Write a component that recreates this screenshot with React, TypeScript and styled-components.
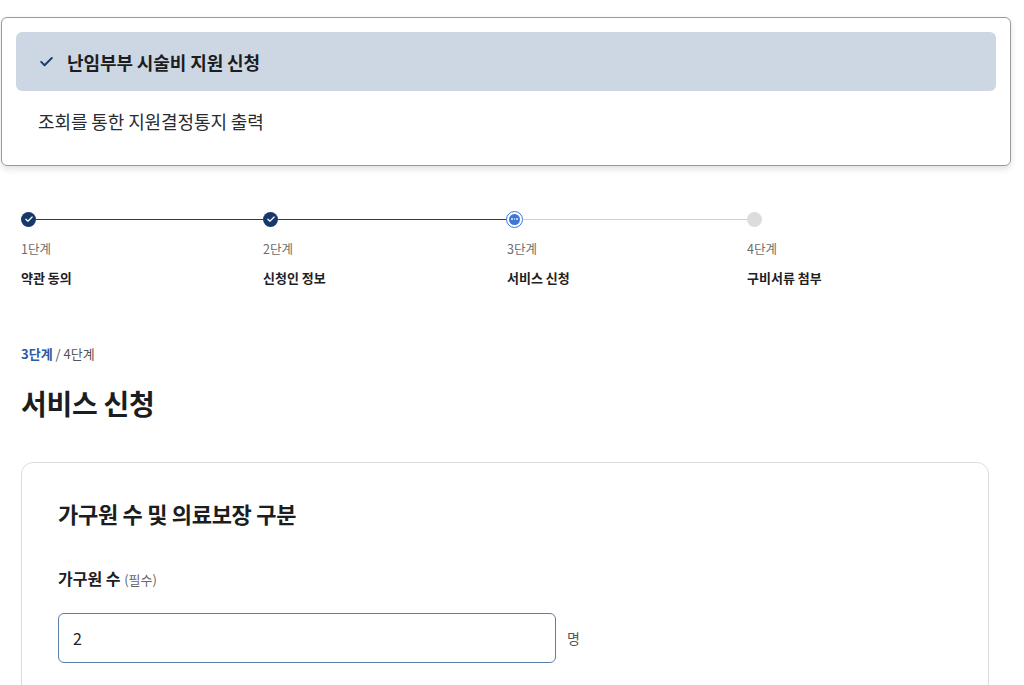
import React from 'react';
import styled, { createGlobalStyle } from 'styled-components';

const GlobalStyle = createGlobalStyle`
  html, body {
    margin: 0;
    padding: 0;
    background: #ffffff;
  }
  body {
    font-family: "Noto Sans CJK KR", "Noto Sans", sans-serif;
    color: #1e2124;
  }
  * {
    box-sizing: border-box;
  }
`;

const Page = styled.div`
  padding: 17px 13px 0 1px;
`;

const MenuBox = styled.div`
  border: 1px solid #9a9a9a;
  border-radius: 6px;
  padding: 14px 14px 15px 14px;
  box-shadow: 0 3px 6px rgba(0, 0, 0, 0.12);
  background: #fff;
`;

const MenuItem = styled.div<{ active?: boolean }>`
  display: flex;
  align-items: center;
  gap: 12px;
  height: 59px;
  padding: 0 22px;
  border-radius: 6px;
  font-size: 18px;
  letter-spacing: -0.1px;
  font-weight: ${p => (p.active ? 700 : 400)};
  background: ${p => (p.active ? '#cdd7e3' : 'transparent')};
  color: ${p => (p.active ? '#1b1d20' : '#2a2c30')};
`;

const Content = styled.div`
  padding: 0 21px 0 21px;
`;

const Steps = styled.ol`
  list-style: none;
  margin: 45px 0 0 0;
  padding: 0;
  display: grid;
  grid-template-columns: 242px 244px 240px 242px;
`;

const Step = styled.li`
  display: flex;
  flex-direction: column;
`;

const Track = styled.div`
  display: flex;
  align-items: center;
  height: 16px;
`;

const Line = styled.div<{ done?: boolean }>`
  flex: 1;
  height: 1px;
  background: ${p => (p.done ? '#1f3d68' : '#cfcfcf')};
`;

const DotDone = styled.span`
  width: 15px;
  height: 15px;
  border-radius: 50%;
  background: #16386a;
  display: flex;
  align-items: center;
  justify-content: center;
  flex-shrink: 0;
`;

const DotCurrent = styled.span`
  width: 17px;
  height: 17px;
  border-radius: 50%;
  border: 1.5px solid #3f77d6;
  background: #fff;
  display: flex;
  align-items: center;
  justify-content: center;
  flex-shrink: 0;
  margin-left: -1px;
`;

const DotInner = styled.span`
  width: 11px;
  height: 11px;
  border-radius: 50%;
  background: #3f77d6;
  display: flex;
  align-items: center;
  justify-content: center;
  gap: 1px;
`;

const Pip = styled.span`
  width: 1.5px;
  height: 1.5px;
  border-radius: 50%;
  background: #cfe0ff;
`;

const DotTodo = styled.span`
  width: 15px;
  height: 15px;
  border-radius: 50%;
  background: #dcdcdc;
  flex-shrink: 0;
`;

const StepNum = styled.span`
  margin-top: 13px;
  font-size: 12.5px;
  color: #6d6d6d;
  line-height: 18px;
`;

const StepName = styled.span`
  margin-top: 11px;
  font-size: 13px;
  font-weight: 700;
  color: #1e2124;
  line-height: 18px;
`;

const Progress = styled.div`
  margin-top: 57px;
  font-size: 13px;
  color: #555;
  line-height: 20px;
`;

const Current = styled.b`
  color: #2d5aa6;
  font-weight: 700;
`;

const Title = styled.h2`
  margin: 22px 0 0 0;
  font-size: 28px;
  font-weight: 700;
  line-height: 34px;
  letter-spacing: -0.3px;
  color: #1b1d20;
`;

const Card = styled.section`
  margin-top: 42px;
  width: 968px;
  border: 1px solid #dcdcdc;
  border-radius: 12px;
  padding: 34px 36px 40px 36px;
`;

const CardTitle = styled.h3`
  margin: 0;
  font-size: 22px;
  font-weight: 700;
  line-height: 32px;
  letter-spacing: -0.3px;
  color: #1b1d20;
`;

const Label = styled.div`
  margin-top: 37px;
  font-size: 16px;
  font-weight: 700;
  line-height: 24px;
  color: #1e2124;
`;

const Req = styled.span`
  font-size: 13px;
  font-weight: 400;
  color: #666;
`;

const FieldRow = styled.div`
  margin-top: 21px;
  display: flex;
  align-items: center;
  gap: 11px;
`;

const Input = styled.input`
  width: 498px;
  height: 50px;
  border: 1px solid #5a7ea6;
  border-radius: 6px;
  padding: 0 14px;
  font-family: inherit;
  font-size: 16px;
  color: #1e2124;
  outline: none;
`;

const Unit = styled.span`
  font-size: 14px;
  color: #555;
`;

const CheckIcon = ({ size, color, stroke }: { size: number; color: string; stroke: number }) => (
  <svg width={size} height={size} viewBox="0 0 16 16" fill="none">
    <path d="M3 8.3l3.2 3.2L13 4.7" stroke={color} strokeWidth={stroke} strokeLinecap="round" strokeLinejoin="round" />
  </svg>
);

const steps = [
  { num: '1단계', name: '약관 동의', state: 'done' },
  { num: '2단계', name: '신청인 정보', state: 'done' },
  { num: '3단계', name: '서비스 신청', state: 'current' },
  { num: '4단계', name: '구비서류 첨부', state: 'todo' },
];

export default function App() {
  return (
    <>
      <GlobalStyle />
      <Page>
        <MenuBox>
          <MenuItem active>
            <CheckIcon size={17} color="#1c3b6b" stroke={1.8} />
            난임부부 시술비 지원 신청
          </MenuItem>
          <MenuItem>조회를 통한 지원결정통지 출력</MenuItem>
        </MenuBox>
      </Page>
      <Content>
        <Steps>
          {steps.map((s, i) => (
            <Step key={s.num}>
              <Track>
                {s.state === 'done' && (
                  <DotDone>
                    <CheckIcon size={10} color="#fff" stroke={2} />
                  </DotDone>
                )}
                {s.state === 'current' && (
                  <DotCurrent>
                    <DotInner>
                      <Pip />
                      <Pip />
                      <Pip />
                    </DotInner>
                  </DotCurrent>
                )}
                {s.state === 'todo' && <DotTodo />}
                {i < steps.length - 1 && <Line done={s.state === 'done'} />}
              </Track>
              <StepNum>{s.num}</StepNum>
              <StepName>{s.name}</StepName>
            </Step>
          ))}
        </Steps>
        <Progress>
          <Current>3단계</Current> / 4단계
        </Progress>
        <Title>서비스 신청</Title>
        <Card>
          <CardTitle>가구원 수 및 의료보장 구분</CardTitle>
          <Label>
            가구원 수 <Req>(필수)</Req>
          </Label>
          <FieldRow>
            <Input defaultValue="2" />
            <Unit>명</Unit>
          </FieldRow>
        </Card>
      </Content>
    </>
  );
}
